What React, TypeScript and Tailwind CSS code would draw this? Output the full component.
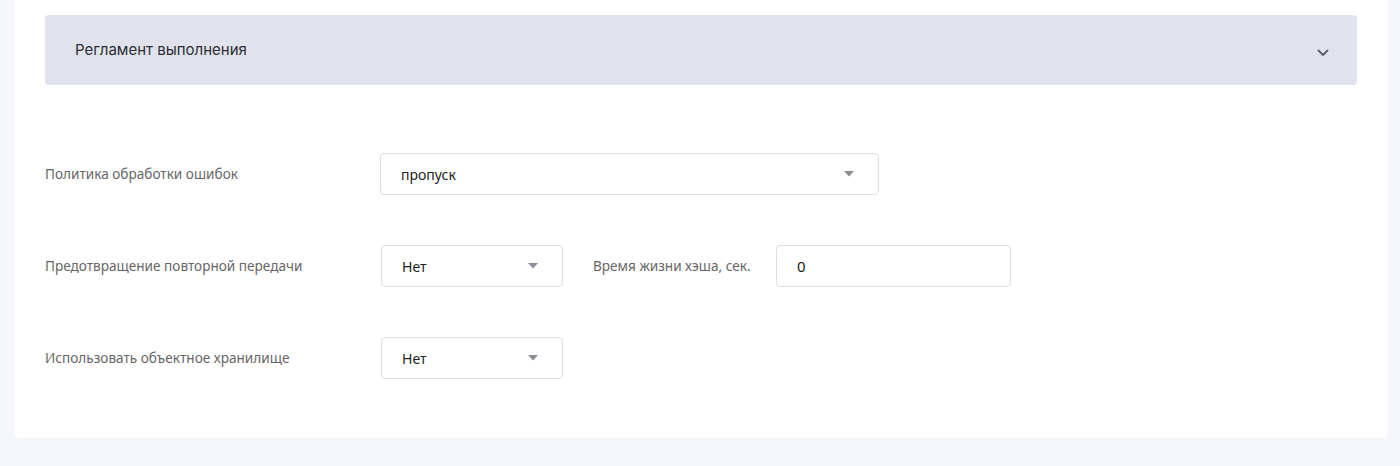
import React from "react";

const Caret = () => (
  <svg width="10" height="6" viewBox="0 0 10 6" className="shrink-0">
    <path d="M0 0 L10 0 L5 5.5 Z" fill="#8a8d94" />
  </svg>
);

const Select = ({ value, w }: { value: string; w: string }) => (
  <div className={`${w} h-[42px] border border-[#dcdfe6] rounded-[4px] bg-white flex items-center justify-between pl-[20px] pr-[24px]`}>
    <span className="text-[14px] text-[#222]">{value}</span>
    <Caret />
  </div>
);

export default function App() {
  return (
    <div className="w-[1400px] h-[466px] bg-[#f5f6fa] overflow-hidden" style={{ fontFamily: '"Noto Sans", "Open Sans", sans-serif' }}>
      <div className="ml-[14px] w-[1374px] h-[438px] bg-white rounded-b-[6px] px-[31px] pt-[15px]">
        <div className="h-[70px] bg-[#e0e3ec] rounded-[4px] flex items-center justify-between pl-[30px] pr-[28px]">
          <span className="text-[15px] text-[#2b2d33]" style={{ fontFamily: "Inter, sans-serif" }}>Регламент выполнения</span>
          <svg width="12" height="8" viewBox="0 0 12 8" className="mt-[6px]">
            <path d="M1.5 1.5 L6 6 L10.5 1.5" fill="none" stroke="#5a5d66" strokeWidth="1.8" strokeLinecap="round" strokeLinejoin="round" />
          </svg>
        </div>
        <div className="mt-[68px] flex flex-col gap-[50px]">
          <div className="flex items-center">
            <div className="w-[335px] text-[13.6px] text-[#666]">Политика обработки ошибок</div>
            <Select value="пропуск" w="w-[499px]" />
          </div>
          <div className="flex items-center">
            <div className="w-[336px] text-[13.6px] text-[#666]">Предотвращение повторной передачи</div>
            <Select value="Нет" w="w-[182px]" />
            <div className="ml-[30px] w-[183px] text-[13.6px] text-[#666]">Время жизни хэша, сек.</div>
            <div className="w-[235px] h-[42px] border border-[#dcdfe6] rounded-[4px] flex items-center pl-[20px] text-[15px] text-[#222]">0</div>
          </div>
          <div className="flex items-center">
            <div className="w-[336px] text-[13.6px] text-[#666]">Использовать объектное хранилище</div>
            <Select value="Нет" w="w-[182px]" />
          </div>
        </div>
      </div>
    </div>
  );
}
